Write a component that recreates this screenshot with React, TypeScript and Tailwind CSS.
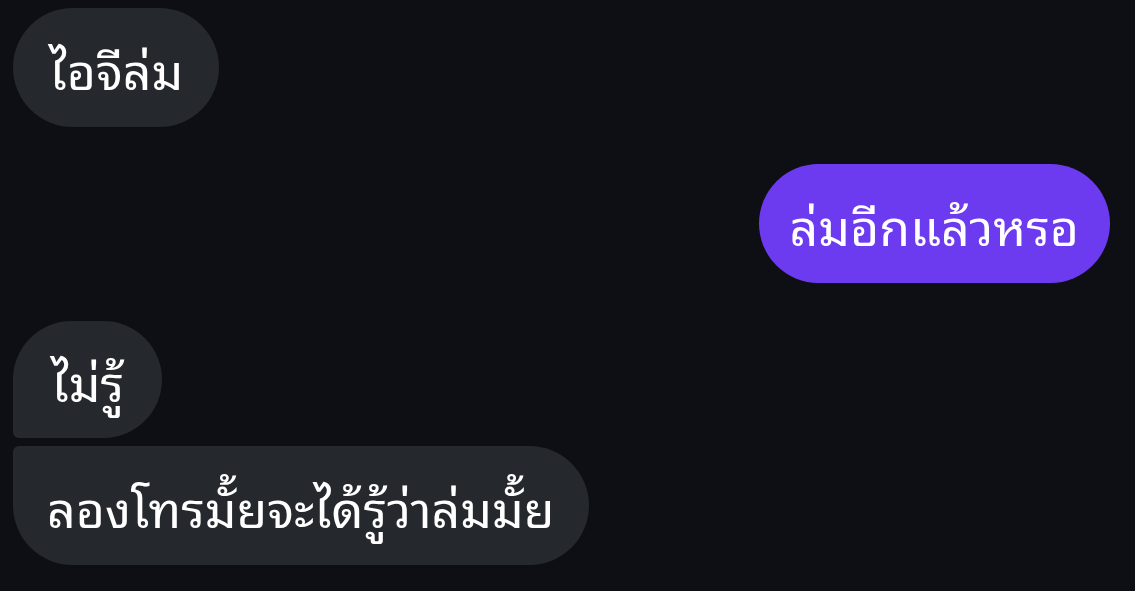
type Msg = { text: string; mine?: boolean; shape: string };

const messages: Msg[] = [
  { text: 'ไอจีล่ม', shape: 'h-[119px] rounded-[60px] px-[36px]' },
  { text: 'ล่มอีกแล้วหรอ', mine: true, shape: 'h-[119px] rounded-[60px] px-[31px]' },
  { text: 'ไม่รู้', shape: 'h-[117px] rounded-t-[60px] rounded-br-[60px] rounded-bl-[6px] mt-[38px] px-[38px]' },
  { text: 'ลองโทรมั้ยจะได้รู้ว่าล่มมั้ย', shape: 'h-[119px] rounded-b-[60px] rounded-tr-[60px] rounded-tl-[6px] mt-[8px] px-[34px]' },
];

export default function App() {
  return (
    <div
      className="w-[1135px] h-[591px] bg-[#0d0f14] px-[13px] pt-[8px] flex flex-col text-white"
      style={{ fontFamily: '"Noto Sans Thai Looped", "Noto Sans", sans-serif' }}
    >
      {messages.map((m, i) => (
        <div
          key={i}
          className={`flex ${m.mine ? 'justify-end pr-[12px] mt-[37px]' : 'justify-start'}`}
        >
          <div
            className={`flex items-center text-[50px] leading-none ${m.shape} ${
              m.mine ? 'bg-[#6d3bef]' : 'bg-[#25282d]'
            }`}
          >
            {m.text}
          </div>
        </div>
      ))}
    </div>
  );
}
